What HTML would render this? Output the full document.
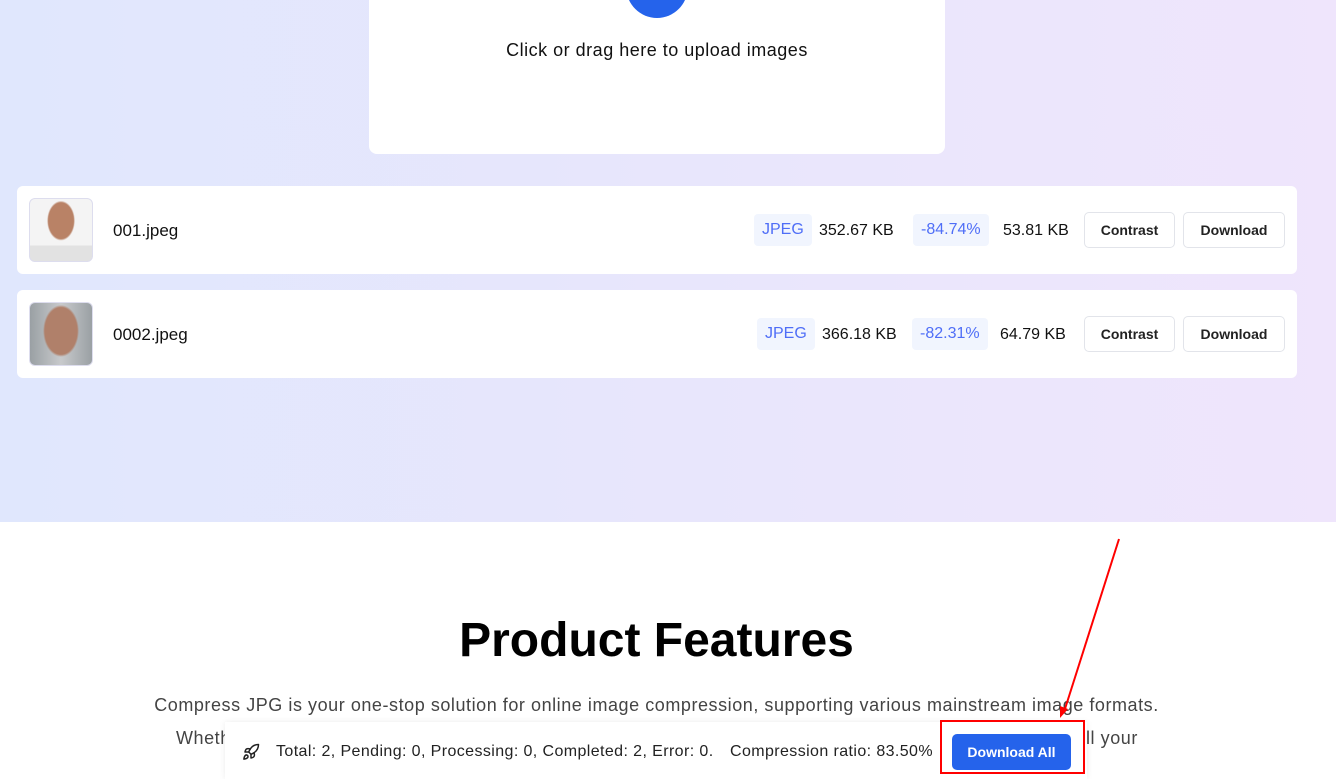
<!DOCTYPE html>
<html><head><style>
*{box-sizing:border-box;margin:0;padding:0}
body{width:1336px;height:779px;overflow:hidden;font-family:"Liberation Sans",sans-serif;background:#fff;position:relative;color:#111}
.hero{position:absolute;left:0;top:0;width:1336px;height:522px;background:linear-gradient(90deg,#e0e7fd,#ebe6fc 70%,#efe5fc)}
.up{position:absolute;left:369px;top:-10px;width:576px;height:164px;background:#fff;border-radius:8px}
.circ{position:absolute;left:626px;top:-45px;width:62px;height:63px;border-radius:50%;background:#2563eb}
.uptxt{position:absolute;left:369px;width:576px;top:40px;text-align:center;font-size:18px;color:#111;letter-spacing:0.5px}
.row{position:absolute;left:17px;width:1280px;height:88px;background:#fff;border-radius:6px}
.thumb{position:absolute;left:12px;top:12px;width:64px;height:64px;border-radius:6px;border:1px solid #dde;overflow:hidden}
.name{position:absolute;left:96px;top:35px;font-size:17px}
.tag{position:absolute;top:28px;height:32px;line-height:32px;padding:0 8px;background:#f1f5fe;color:#4f6ef7;font-size:16px;border-radius:4px}
.num{position:absolute;top:29px;line-height:32px;font-size:16px}
.btn{position:absolute;top:26px;height:36px;line-height:34px;border:1px solid #e2e4ea;border-radius:5px;font-size:14px;text-align:center;background:#fff;font-weight:bold;color:#222}
h2{position:absolute;left:0;width:1313px;top:613px;text-align:center;font-size:48px;font-weight:bold;color:#000}
.p{position:absolute;left:0;width:1313px;text-align:center;font-size:18px;color:#444;letter-spacing:0.55px;white-space:nowrap}
.bar{position:absolute;left:225px;top:722px;width:862px;height:57px;background:#fff;box-shadow:0 0 6px rgba(0,0,0,.08)}
.bar span{position:absolute;top:21px;font-size:16px;color:#222;letter-spacing:0.4px}
.dl{position:absolute;left:952px;top:734px;width:119px;height:36px;background:#2563eb;color:#fff;border-radius:5px;font-size:14px;font-weight:bold;line-height:36px;text-align:center}
.red{position:absolute;left:940px;top:720px;width:145px;height:54px;border:2px solid #f00}
</style></head><body>
<div class="hero">
<div class="up"></div><div class="circ"></div>
<div class="uptxt">Click or drag here to upload images</div>
<div class="row" style="top:186px">
<div class="thumb" style="background:radial-gradient(ellipse 14px 20px at 50% 35%,#b98266 90%,transparent 100%),linear-gradient(#f4f4f4 75%,#e2e2e2 75%)"></div>
<div class="name">001.jpeg</div>
<div class="tag" style="left:737px">JPEG</div><div class="num" style="left:802px">352.67 KB</div>
<div class="tag" style="left:896px">-84.74%</div><div class="num" style="left:986px">53.81 KB</div>
<div class="btn" style="left:1067px;width:91px">Contrast</div><div class="btn" style="left:1166px;width:102px">Download</div>
</div>
<div class="row" style="top:290px">
<div class="thumb" style="background:radial-gradient(ellipse 18px 26px at 50% 45%,#b0806a 90%,transparent 100%),linear-gradient(90deg,#9aa0a4,#c8cacc,#9aa0a4)"></div>
<div class="name">0002.jpeg</div>
<div class="tag" style="left:740px">JPEG</div><div class="num" style="left:805px">366.18 KB</div>
<div class="tag" style="left:895px">-82.31%</div><div class="num" style="left:983px">64.79 KB</div>
<div class="btn" style="left:1067px;width:91px">Contrast</div><div class="btn" style="left:1166px;width:102px">Download</div>
</div>
</div>
<h2>Product Features</h2>
<div class="p" style="top:695px">Compress JPG is your one-stop solution for online image compression, supporting various mainstream image formats.</div>
<div class="p" style="top:728px;left:176px;width:auto;text-align:left">Whether you are a designer, developer, or content creator, Compress JPG helps</div>
<div class="p" style="top:728px;left:1086px;width:auto;text-align:left">ll your</div>
<div class="bar">
<svg style="position:absolute;left:17px;top:21px" width="18" height="18" viewBox="0 0 24 24" fill="none" stroke="#222" stroke-width="2" stroke-linecap="round" stroke-linejoin="round"><path d="M4.5 16.5c-1.5 1.3-2 5-2 5s3.7-.5 5-2c.7-.8.7-2.1-.1-2.9a2.2 2.2 0 0 0-2.9-.1z"/><path d="M12 15l-3-3a22 22 0 0 1 2-3.9A12.9 12.9 0 0 1 22 2c0 2.7-.8 7.5-6 11a22.4 22.4 0 0 1-4 2z"/><path d="M9 12H4s.6-3 2-4c1.6-1.1 5 0 5 0"/><path d="M12 15v5s3-.6 4-2c1.1-1.6 0-5 0-5"/></svg>
<span style="left:51px">Total: 2, Pending: 0, Processing: 0, Completed: 2, Error: 0.</span>
<span style="left:505px">Compression ratio: 83.50%</span>
</div>
<div class="dl">Download All</div>
<div class="red"></div>
<svg style="position:absolute;left:0;top:0" width="1336" height="779"><line x1="1119" y1="539" x2="1064" y2="712" stroke="#f00" stroke-width="2"/><path d="M1060 718l0-12 8 3z" fill="#f00"/></svg>
</body></html>
